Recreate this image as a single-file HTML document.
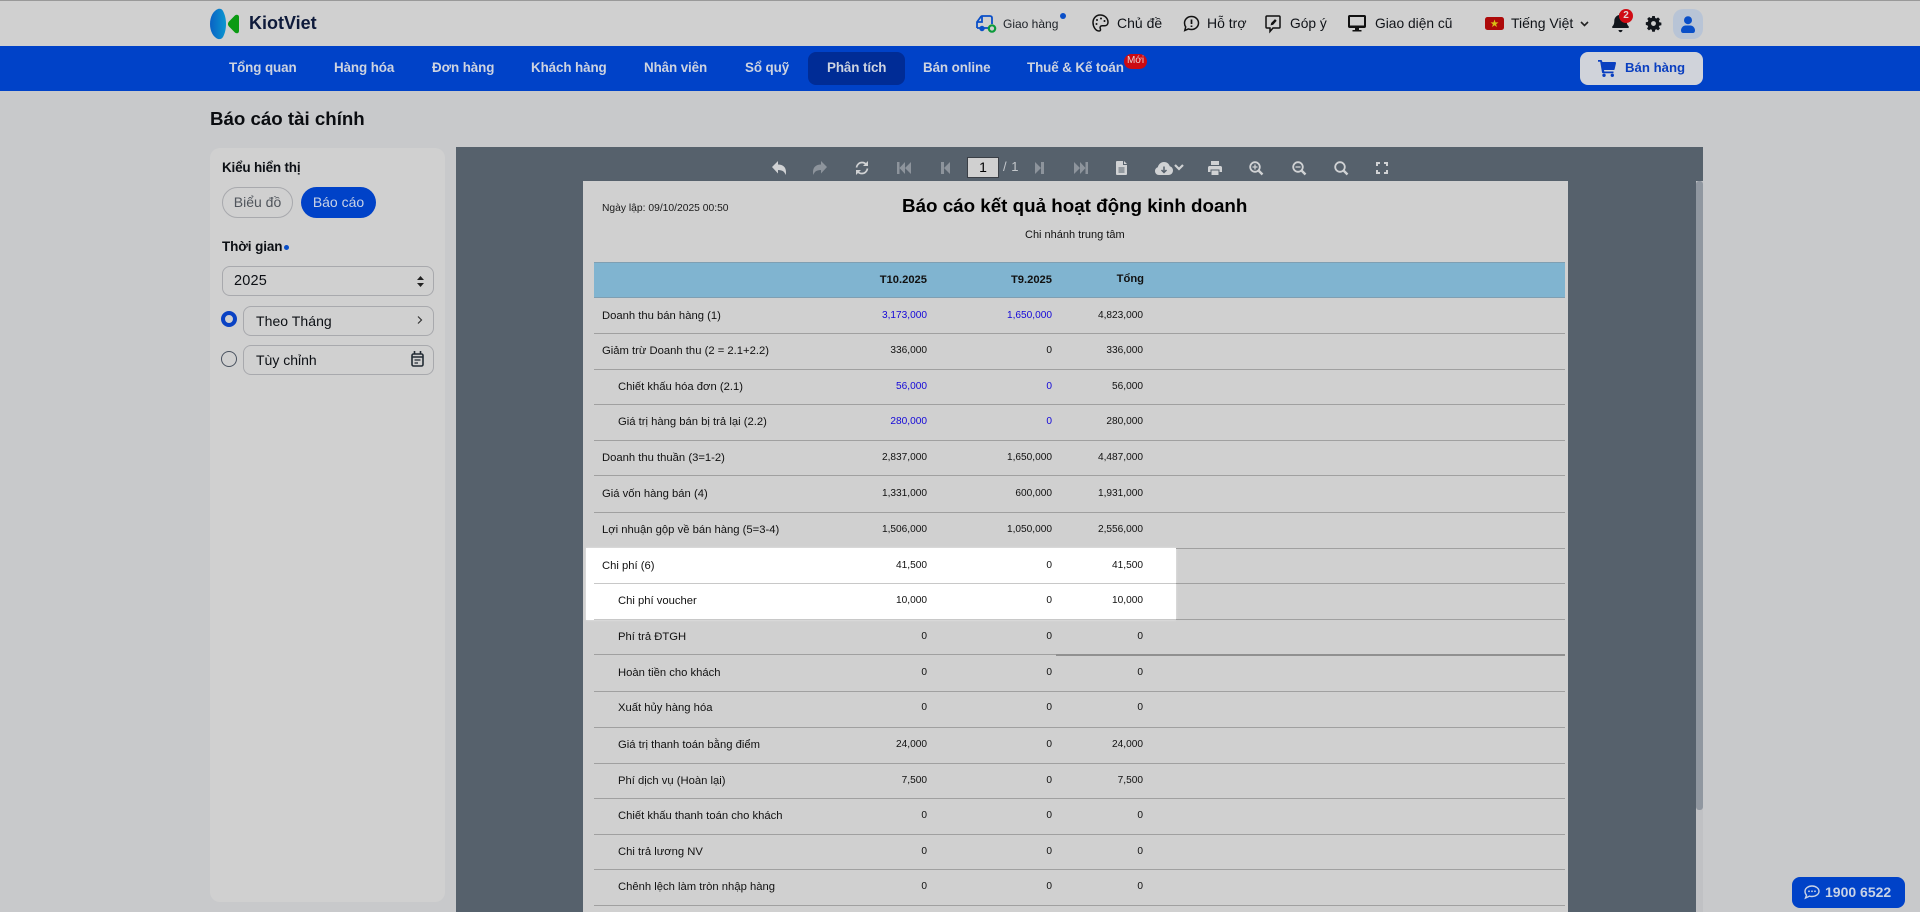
<!DOCTYPE html>
<html lang="vi"><head><meta charset="utf-8"><title>Báo cáo tài chính</title>
<style>
*{box-sizing:border-box}
html,body{margin:0;padding:0;width:1920px;height:912px;overflow:hidden;background:#c8c9cb;font-family:"Liberation Sans",sans-serif;color:#0c0f14}
.t{position:absolute;white-space:nowrap;line-height:20px;height:20px}
svg{position:absolute;display:block;overflow:visible}
#top{position:absolute;left:0;top:0;width:1920px;height:46px;background:#d0d0d0;border-top:1px solid #999}
#nav{position:absolute;left:0;top:46px;width:1920px;height:45px;background:#0042c8}
.n{font-size:13.4px;font-weight:bold;color:#cdd3e0;top:58px;letter-spacing:-.1px}
.h{font-size:14px;top:13px;color:#101318}
#side{position:absolute;left:210px;top:148px;width:235px;height:754px;background:#d0d0d0;border-radius:10px}
.fld{position:absolute;border:1px solid #a8a9ad;border-radius:8px;left:222px;width:212px;height:30px}
#rep{position:absolute;left:456px;top:147px;width:1247px;height:765px;background:#56616c}
#pg{position:absolute;left:583px;top:181px;width:985px;height:731px;background:#d0d0d0}
.ln{position:absolute;left:594px;width:971px;height:1px;background:#a0a0a0}
.r{position:absolute;left:0;width:1920px;height:20px;line-height:20px;font-size:11.25px;color:#111;margin-top:1px}
.r span{position:absolute;white-space:nowrap}
.r .l{left:602px}.r .l.i{left:618px}
.r .x,.r .y,.r .z{font-size:10.15px;text-align:right;width:90px}
.r .x{left:837px}.r .y{left:962px}.r .z{left:1053px}
.bl{color:#1408d8}
.r.hd{font-weight:bold;font-size:11.2px;margin-top:0}
</style></head><body>

<div id="top"></div>
<div id="nav"></div>

<!-- logo -->
<svg style="left:210px;top:8px" width="32" height="32" viewBox="0 0 32 32">
<defs><linearGradient id="g1" x1="0" x2="1" y1="0" y2="0"><stop offset="0" stop-color="#0a62c4"/><stop offset="1" stop-color="#0a96d0"/></linearGradient></defs>
<path d="M8 1C3 3 0 9 0 16s3 13 8 15c2 .6 4-.3 5-2 2-4 3-8 3-13s-1-9-3-13c-1-2-3-2.600-5-2z" fill="url(#g1)"/>
<path d="M28 7c-1-.5-2-.3-3 .4l-6 6.100c-1.400 1.500-1.400 3.500 0 5l6 6.100c1 .7 2 .9 3 .4 .8-.5 1-1.400 1-2.400V9.400c0-1-.2-1.900-1-2.400z" fill="#0a9a12"/>
</svg>
<div class="t" style="left:249px;top:13px;font-size:18px;font-weight:bold;color:#0e1a3a">KiotViet</div>

<!-- top right -->
<svg style="left:975px;top:13px" width="22" height="20" viewBox="0 0 22 20" fill="none" stroke="#0a4fc8" stroke-width="1.800">
<path d="M2 15V9l4-5.500c.3-.4 .7-.5 1-.5h8c1.200 0 2 .8 2 2v6"/><path d="M2 9h5V3.500"/><path d="M2 15h3M9 15h5"/><circle cx="7" cy="15.500" r="1.800" fill="#0a4fc8"/>
<circle cx="17" cy="15.500" r="3.200" fill="#d0d0d0" stroke="#0a9a3a" stroke-width="2.200"/></svg>
<div class="t" style="left:1003px;top:14px;font-size:12px;color:#1c2026">Giao hàng</div>
<div style="position:absolute;left:1060px;top:13px;width:6px;height:6px;border-radius:50%;background:#0a4fc8"></div>

<svg style="left:1092px;top:14px" width="17" height="18" viewBox="0 0 17 18" fill="none" stroke="#111" stroke-width="1.500">
<path d="M8 1C4 1 1 4.500 1 8.500S3.500 17 7 17c1.500 0 1.800-1.200 1.300-2.300-.7-1.700 .2-3 2-3h2.200c2 0 3.500-1.300 3.500-3.500C16 4 12.500 1 8 1z"/>
<circle cx="5" cy="6" r="1" fill="#111" stroke="none"/><circle cx="9" cy="4.500" r="1" fill="#111" stroke="none"/><circle cx="12.500" cy="7" r="1" fill="#111" stroke="none"/><circle cx="4.500" cy="10" r="1" fill="#111" stroke="none"/></svg>
<div class="t h" style="left:1117px">Chủ đề</div>

<svg style="left:1183px;top:15px" width="17" height="17" viewBox="0 0 17 17" fill="none" stroke="#111" stroke-width="1.500">
<path d="M8.500 1.500c4 0 7 2.900 7 6.500s-3 6.500-7 6.500c-1 0-2-.2-3-.6L1.800 15.500l.9-3.600C1.900 10.800 1.500 9.500 1.500 8c0-3.600 3-6.500 7-6.500z"/>
<path d="M8.500 4.500v4.500M8.500 10.500v1.500" stroke-width="1.700"/></svg>
<div class="t h" style="left:1207px">Hỗ trợ</div>

<svg style="left:1265px;top:15px" width="16" height="18" viewBox="0 0 16 18" fill="none" stroke="#111" stroke-width="1.500">
<path d="M2 1h12c.6 0 1 .4 1 1v10c0 .6-.4 1-1 1H8l-3 3.500V13H2c-.6 0-1-.4-1-1V2c0-.6 .4-1 1-1z"/><path d="M6 10l.5-2 3.500-3.500 1.300 1.300L8 9.500z" fill="#111" stroke-width=".6"/></svg>
<div class="t h" style="left:1290px;top:14px;font-size:13.8px">Góp ý</div>

<svg style="left:1348px;top:15px" width="18" height="17" viewBox="0 0 18 17">
<path d="M1.500 0h15C17.300 0 18 .7 18 1.500v10c0 .8-.7 1.500-1.500 1.500H11v2h2.500v1.500h-9V15H7v-2H1.500C.7 13 0 12.300 0 11.500v-10C0 .7 .7 0 1.500 0zM2 2v8.500h14V2z" fill="#111"/></svg>
<div class="t h" style="left:1375px;top:14px;font-size:13.8px">Giao diện cũ</div>

<svg style="left:1485px;top:17px" width="19" height="13" viewBox="0 0 19 13"><rect width="19" height="13" rx="2.500" fill="#ad0a0a"/><path d="M9.500 2.500l1 2.900h3l-2.400 1.800 .9 2.900-2.500-1.800-2.500 1.800 .9-2.900-2.400-1.800h3z" fill="#d8c015"/></svg>
<div class="t h" style="left:1511px">Tiếng Việt</div>
<svg style="left:1580px;top:21px" width="9" height="6" viewBox="0 0 9 6" fill="none" stroke="#222" stroke-width="1.600"><path d="M1 1l3.500 3.500L8 1"/></svg>

<svg style="left:1612px;top:13px" width="17" height="20" viewBox="0 0 17 20"><path d="M8.500 0c.8 0 1.400 .6 1.400 1.300v.7c3 .6 4.800 3 4.800 6 0 2 .4 4 2 5.500.3 .3 .3 1.500-.7 1.500H1c-1 0-1-1.200-.7-1.500C1.900 12 2.300 10 2.300 8c0-3 1.800-5.400 4.800-6v-.7C7.100 .6 7.700 0 8.500 0zM6.500 17h4c0 1.200-.9 2.200-2 2.200s-2-1-2-2.200z" fill="#12161c"/></svg>
<div style="position:absolute;left:1619px;top:9px;width:14px;height:14px;border-radius:50%;background:#d00c14;color:#e6d6d6;font-size:10px;font-weight:bold;line-height:14px;text-align:center">2</div>

<svg style="left:1646px;top:16px" width="15" height="15" viewBox="0 0 16 16"><path fill-rule="evenodd" d="M6.600 0h2.800l.4 2.100 1.300.6 1.800-1.200 2 2-1.200 1.800.6 1.300 2.100.4v2.800l-2.100.4-.6 1.300 1.200 1.800-2 2-1.800-1.200-1.300.6-.4 2.100H6.600l-.4-2.100-1.300-.6-1.800 1.200-2-2 1.200-1.800-.6-1.300L-.2 9.400V6.600l2.100-.4.6-1.300L1.300 3.100l2-2 1.800 1.200 1.300-.6zM8 5.400a2.600 2.600 0 1 0 0 5.200 2.600 2.600 0 0 0 0-5.200z" fill="#12161c"/></svg>

<div style="position:absolute;left:1673px;top:9px;width:30px;height:30px;border-radius:10px;background:#b8c4d6"></div>
<svg style="left:1681px;top:15.500px" width="14" height="17" viewBox="0 0 14 17"><circle cx="7" cy="4.200" r="4" fill="#0a4fc8"/><path d="M0 14.500C0 11.500 2.500 9.500 4.500 9.500h5c2 0 4.500 2 4.500 5 0 1.500-.8 2.500-2.200 2.500H2.200C.8 17 0 16 0 14.500z" fill="#0a4fc8"/></svg>

<!-- nav -->
<div style="position:absolute;left:808px;top:52px;width:97px;height:33px;border-radius:8px;background:#002c96"></div>
<div class="t n" style="left:229px">Tổng quan</div>
<div class="t n" style="left:334px">Hàng hóa</div>
<div class="t n" style="left:432px">Đơn hàng</div>
<div class="t n" style="left:531px">Khách hàng</div>
<div class="t n" style="left:644px">Nhân viên</div>
<div class="t n" style="left:745px">Sổ quỹ</div>
<div class="t n" style="left:827px">Phân tích</div>
<div class="t n" style="left:923px">Bán online</div>
<div class="t n" style="left:1027px">Thuế &amp; Kế toán</div>
<div style="position:absolute;left:1124px;top:54px;width:23px;height:15px;border-radius:8px;background:#cc0a12;color:#e6d2d2;font-size:10px;line-height:14px;text-align:center">Mới</div>

<div style="position:absolute;left:1580px;top:52px;width:123px;height:33px;border-radius:8px;background:#d0d3da"></div>
<svg style="left:1598px;top:60px" width="18" height="17" viewBox="0 0 18 17"><path d="M0 0h3c.5 0 .9 .3 1 .8L4.400 2H17c.7 0 1.100 .6 1 1.200l-1.400 6c-.1 .5-.5 .8-1 .8H6l.3 1.500H15.500v1.700H5c-.5 0-.9-.3-1-.8L2.200 1.700H0z" fill="#0a3fc0"/><circle cx="6" cy="15.300" r="1.700" fill="#0a3fc0"/><circle cx="14.300" cy="15.300" r="1.700" fill="#0a3fc0"/></svg>
<div class="t" style="left:1625px;top:58px;font-size:13.2px;font-weight:bold;color:#0a3fc0">Bán hàng</div>

<div class="t" style="left:210px;top:109px;font-size:18.700px;font-weight:bold;color:#0a0c10">Báo cáo tài chính</div>

<!-- sidebar -->
<div id="side"></div>
<div class="t" style="left:222px;top:158px;font-size:13.5px;font-weight:bold;letter-spacing:-.2px">Kiểu hiển thị</div>
<div style="position:absolute;left:222px;top:187px;width:71px;height:31px;border:1px solid #a8a9ad;border-radius:16px;color:#50555c;font-size:14px;line-height:29px;text-align:center">Biểu đồ</div>
<div style="position:absolute;left:301px;top:187px;width:75px;height:31px;background:#0042c8;border-radius:16px;color:#c9d3e6;font-size:14px;line-height:31px;text-align:center">Báo cáo</div>
<div class="t" style="left:222px;top:237px;font-size:13.5px;font-weight:bold;letter-spacing:-.1px">Thời gian</div>
<div style="position:absolute;left:284px;top:245px;width:5px;height:5px;border-radius:50%;background:#0a4fc8"></div>
<div class="fld" style="top:266px"></div>
<div class="t" style="left:234px;top:271px;font-size:14.500px;letter-spacing:.2px">2025</div>
<svg style="left:417px;top:276px" width="7" height="11" viewBox="0 0 7 11"><path d="M3.500 0L7 4H0zM3.500 11L0 7h7z" fill="#222"/></svg>
<div style="position:absolute;left:221px;top:311px;width:16px;height:16px;border-radius:50%;border:4.500px solid #0a42c4;background:#d0d0d0"></div>
<div class="fld" style="top:306px;left:243px;width:191px"></div>
<div class="t" style="left:256px;top:311px;font-size:14px;letter-spacing:.05px">Theo Tháng</div>
<svg style="left:417px;top:315px" width="6" height="10" viewBox="0 0 6 10" fill="none" stroke="#333" stroke-width="1.200"><path d="M1 1.500l3.500 3.500-3.500 3.500"/></svg>
<div style="position:absolute;left:221px;top:351px;width:16px;height:16px;border-radius:50%;border:1.200px solid #4a5360"></div>
<div class="fld" style="top:345px;left:243px;width:191px"></div>
<div class="t" style="left:256px;top:350px;font-size:14px">Tùy chỉnh</div>
<svg style="left:411px;top:351px" width="13" height="16" viewBox="0 0 13 16" fill="none" stroke="#222b34" stroke-width="1.600"><rect x="1" y="3" width="11" height="12" rx="1.500"/><path d="M1 6h11M3.500 0v3M9.500 0v3" /><path d="M3.500 9h6M3.500 12h3.500" stroke-width="1.300"/></svg>

<!-- report viewer -->
<div id="rep"></div>
<div style="position:absolute;left:1696px;top:181px;width:7px;height:731px;background:#c0c1c4"></div>
<div style="position:absolute;left:1696px;top:181px;width:7px;height:629px;background:#9097a0;border-radius:3px"></div>

<!-- toolbar -->
<svg style="left:772px;top:161px" width="14" height="14" viewBox="0 0 14 14"><path d="M6 0v3.500c5 0 8 2.800 8 7.500 0 1-.1 2-.5 3-.7-3.200-3-5-7.500-5v3.500L0 6z" fill="#d0d2d4"/></svg>
<svg style="left:813px;top:161px" width="14" height="14" viewBox="0 0 14 14"><path d="M8 0v3.500C3 3.500 0 6.300 0 11c0 1 .1 2 .5 3C1.200 10.800 3.500 9 8 9v3.500L14 6z" fill="#8d949c"/></svg>
<svg style="left:855px;top:160.500px" width="14" height="14" viewBox="0 0 14 14" fill="none" stroke="#d0d2d4" stroke-width="1.700"><path d="M1.500 6.500C2 3.500 4.300 1.500 7 1.500c1.800 0 3.500 .9 4.500 2.300"/><path d="M12.500 7.500C12 10.500 9.700 12.500 7 12.500c-1.800 0-3.500-.9-4.500-2.300"/><path d="M13 0v5H8z" fill="#d0d2d4" stroke="none"/><path d="M1 14V9h5z" fill="#d0d2d4" stroke="none"/></svg>
<svg style="left:897px;top:162px" width="14" height="12" viewBox="0 0 14 12" fill="#8d949c"><rect width="2.500" height="12"/><path d="M8 0v12L2.500 6zM14 0v12L8 6z"/></svg>
<svg style="left:941px;top:162px" width="9" height="12" viewBox="0 0 9 12" fill="#8d949c"><rect width="3" height="12"/><path d="M9 0v12L3 6z"/></svg>
<div style="position:absolute;left:967px;top:157px;width:32px;height:21px;background:#d0d0d0;border:1px solid #3a3f46;text-align:center;font-size:14px;line-height:19px;color:#000">1</div>
<div class="t" style="left:1003px;top:157px;font-size:13px;color:#c4c8cc;letter-spacing:.5px">/ 1</div>
<svg style="left:1035px;top:162px" width="9" height="12" viewBox="0 0 9 12" fill="#8d949c"><rect x="6" width="3" height="12"/><path d="M0 0v12l6-6z"/></svg>
<svg style="left:1074px;top:162px" width="14" height="12" viewBox="0 0 14 12" fill="#8d949c"><rect x="11.500" width="2.500" height="12"/><path d="M0 0v12l6-6zM6 0v12l5.500-6z"/></svg>
<svg style="left:1116px;top:161px" width="11" height="14" viewBox="0 0 11 14"><path d="M1 0h6v4h4v9c0 .6-.4 1-1 1H1c-.6 0-1-.4-1-1V1c0-.6 .4-1 1-1zM8 0l3 3H8z" fill="#d0d2d4"/><path d="M2.500 7h6M2.500 9h6M2.500 11h6" stroke="#56616c"/></svg>
<svg style="left:1155px;top:161.500px" width="18" height="13" viewBox="0 0 18 13"><path d="M4 13C1.800 13 0 11.300 0 9c0-1.800 1.100-3.300 2.800-3.800C3.500 2.200 6 0 9 0c2.700 0 5 1.700 5.800 4.300C16.700 4.800 18 6.500 18 8.500 18 11 16 13 13.500 13z" fill="#d0d2d4"/><path d="M9 4.500v5.500M6.500 8L9 10.500 11.500 8" fill="none" stroke="#56616c" stroke-width="1.500"/></svg>
<svg style="left:1174px;top:164px" width="10" height="7" viewBox="0 0 10 7" fill="none" stroke="#d0d2d4" stroke-width="2.200"><path d="M1 1l4 4 4-4"/></svg>
<svg style="left:1208px;top:161px" width="14" height="14" viewBox="0 0 14 14"><path d="M3 0h8v4H3zM1.500 5h11c.8 0 1.500 .7 1.500 1.500V11h-2.500V8.500h-9V11H0V6.500C0 5.700 .7 5 1.500 5zM3.500 9.500h7V14h-7z" fill="#d0d2d4"/></svg>
<svg style="left:1249px;top:161px" width="14" height="14" viewBox="0 0 14 14" fill="none" stroke="#d0d2d4" stroke-width="1.800"><circle cx="6" cy="6" r="4.800"/><path d="M9.500 9.500L13.500 13.500" stroke-width="2.400"/><path d="M3.500 6h5M6 3.500v5" stroke-width="1.300"/></svg>
<svg style="left:1292px;top:161px" width="14" height="14" viewBox="0 0 14 14" fill="none" stroke="#d0d2d4" stroke-width="1.800"><circle cx="6" cy="6" r="4.800"/><path d="M9.500 9.500L13.500 13.500" stroke-width="2.400"/><path d="M3.500 6h5" stroke-width="1.300"/></svg>
<svg style="left:1334px;top:161px" width="14" height="14" viewBox="0 0 14 14" fill="none" stroke="#d0d2d4" stroke-width="1.800"><circle cx="6" cy="6" r="4.800"/><path d="M9.500 9.500L13.500 13.500" stroke-width="2.400"/></svg>
<svg style="left:1376px;top:162px" width="12" height="12" viewBox="0 0 12 12" fill="none" stroke="#d0d2d4" stroke-width="2"><path d="M1 4V1h3M8 1h3v3M11 8v3H8M4 11H1V8"/></svg>

<!-- page -->
<div id="pg"></div>
<div class="t" style="left:602px;top:199px;font-size:10.3px;color:#1a1a1a">Ngày lập: 09/10/2025 00:50</div>
<div class="t" style="left:902px;top:195px;font-size:18.800px;font-weight:bold;color:#000;line-height:22px;height:22px">Báo cáo kết quả hoạt động kinh doanh</div>
<div class="t" style="left:1025px;top:225px;font-size:11px;color:#111">Chi nhánh trung tâm</div>

<div style="position:absolute;left:594px;top:262px;width:971px;height:36px;background:#80b4d0;border-top:1px solid #7f9fb2;border-bottom:1px solid #7f9fb2"></div>
<div class="r hd" style="top:270px"><span style="left:837px;width:90px;text-align:right">T10.2025</span><span style="left:962px;width:90px;text-align:right">T9.2025</span><span style="left:1053px;width:91px;text-align:right;top:-1px">Tổng</span></div>

<!-- white highlight -->
<div style="position:absolute;left:586px;top:548px;width:590px;height:72px;background:#fff;box-shadow:0 0 2px #e8e8e8"></div>

<i class="ln" style="top:333px"></i><i class="ln" style="top:369px"></i><i class="ln" style="top:404px"></i><i class="ln" style="top:440px"></i><i class="ln" style="top:475px"></i><i class="ln" style="top:512px"></i><i class="ln" style="top:548px;left:1176px;width:389px"></i><i class="ln" style="top:583px;background:#c8c8c8;width:582px"></i><i class="ln" style="top:583px;left:1176px;width:389px"></i><i class="ln" style="top:619px;background:#c8c8c8;width:582px"></i><i class="ln" style="top:619px;left:1176px;width:389px"></i><i class="ln" style="top:654px"></i><i class="ln" style="top:654px;left:1056px;width:509px;height:2px;background:#909090"></i><i class="ln" style="top:691px"></i><i class="ln" style="top:727px"></i><i class="ln" style="top:763px"></i><i class="ln" style="top:798px"></i><i class="ln" style="top:834px"></i><i class="ln" style="top:869px"></i><i class="ln" style="top:905px"></i>

<div class="r" style="top:305px"><span class="l">Doanh thu bán hàng (1)</span><span class="x bl">3,173,000</span><span class="y bl">1,650,000</span><span class="z">4,823,000</span></div>
<div class="r" style="top:340px"><span class="l">Giảm trừ Doanh thu (2 = 2.1+2.2)</span><span class="x">336,000</span><span class="y">0</span><span class="z">336,000</span></div>
<div class="r" style="top:375.500px"><span class="l i">Chiết khấu hóa đơn (2.1)</span><span class="x bl">56,000</span><span class="y bl">0</span><span class="z">56,000</span></div>
<div class="r" style="top:411px"><span class="l i">Giá trị hàng bán bị trả lại (2.2)</span><span class="x bl">280,000</span><span class="y bl">0</span><span class="z">280,000</span></div>
<div class="r" style="top:447px"><span class="l">Doanh thu thuần (3=1-2)</span><span class="x">2,837,000</span><span class="y">1,650,000</span><span class="z">4,487,000</span></div>
<div class="r" style="top:483px"><span class="l">Giá vốn hàng bán (4)</span><span class="x">1,331,000</span><span class="y">600,000</span><span class="z">1,931,000</span></div>
<div class="r" style="top:519px"><span class="l">Lợi nhuận gộp về bán hàng (5=3-4)</span><span class="x">1,506,000</span><span class="y">1,050,000</span><span class="z">2,556,000</span></div>
<div class="r" style="top:555px"><span class="l">Chi phí (6)</span><span class="x">41,500</span><span class="y">0</span><span class="z">41,500</span></div>
<div class="r" style="top:590px"><span class="l i">Chi phí voucher</span><span class="x">10,000</span><span class="y">0</span><span class="z">10,000</span></div>
<div class="r" style="top:626px"><span class="l i">Phí trả ĐTGH</span><span class="x">0</span><span class="y">0</span><span class="z">0</span></div>
<div class="r" style="top:662px"><span class="l i">Hoàn tiền cho khách</span><span class="x">0</span><span class="y">0</span><span class="z">0</span></div>
<div class="r" style="top:697px"><span class="l i">Xuất hủy hàng hóa</span><span class="x">0</span><span class="y">0</span><span class="z">0</span></div>
<div class="r" style="top:734px"><span class="l i">Giá trị thanh toán bằng điểm</span><span class="x">24,000</span><span class="y">0</span><span class="z">24,000</span></div>
<div class="r" style="top:770px"><span class="l i">Phí dịch vụ (Hoàn lại)</span><span class="x">7,500</span><span class="y">0</span><span class="z">7,500</span></div>
<div class="r" style="top:805px"><span class="l i">Chiết khấu thanh toán cho khách</span><span class="x">0</span><span class="y">0</span><span class="z">0</span></div>
<div class="r" style="top:841px"><span class="l i">Chi trả lương NV</span><span class="x">0</span><span class="y">0</span><span class="z">0</span></div>
<div class="r" style="top:876px"><span class="l i">Chênh lệch làm tròn nhập hàng</span><span class="x">0</span><span class="y">0</span><span class="z">0</span></div>

<!-- hotline -->
<div style="position:absolute;left:1792px;top:877px;width:113px;height:31px;border-radius:8px;background:#0042c8"></div>
<svg style="left:1804px;top:885px" width="16" height="14" viewBox="0 0 16 14" fill="none" stroke="#c9d3e6" stroke-width="1.400"><path d="M8 1c3.900 0 7 2.400 7 5.300S11.900 11.500 8 11.500c-.9 0-1.700-.1-2.500-.4L1.500 13l1-2.800C1.500 9.200 1 7.800 1 6.300 1 3.400 4.100 1 8 1z"/><circle cx="5" cy="6.300" r=".9" fill="#c9d3e6" stroke="none"/><circle cx="8" cy="6.300" r=".9" fill="#c9d3e6" stroke="none"/><circle cx="11" cy="6.300" r=".9" fill="#c9d3e6" stroke="none"/></svg>
<div class="t" style="left:1825px;top:882px;font-size:14px;font-weight:bold;color:#c9d3e6">1900 6522</div>

</body></html>
